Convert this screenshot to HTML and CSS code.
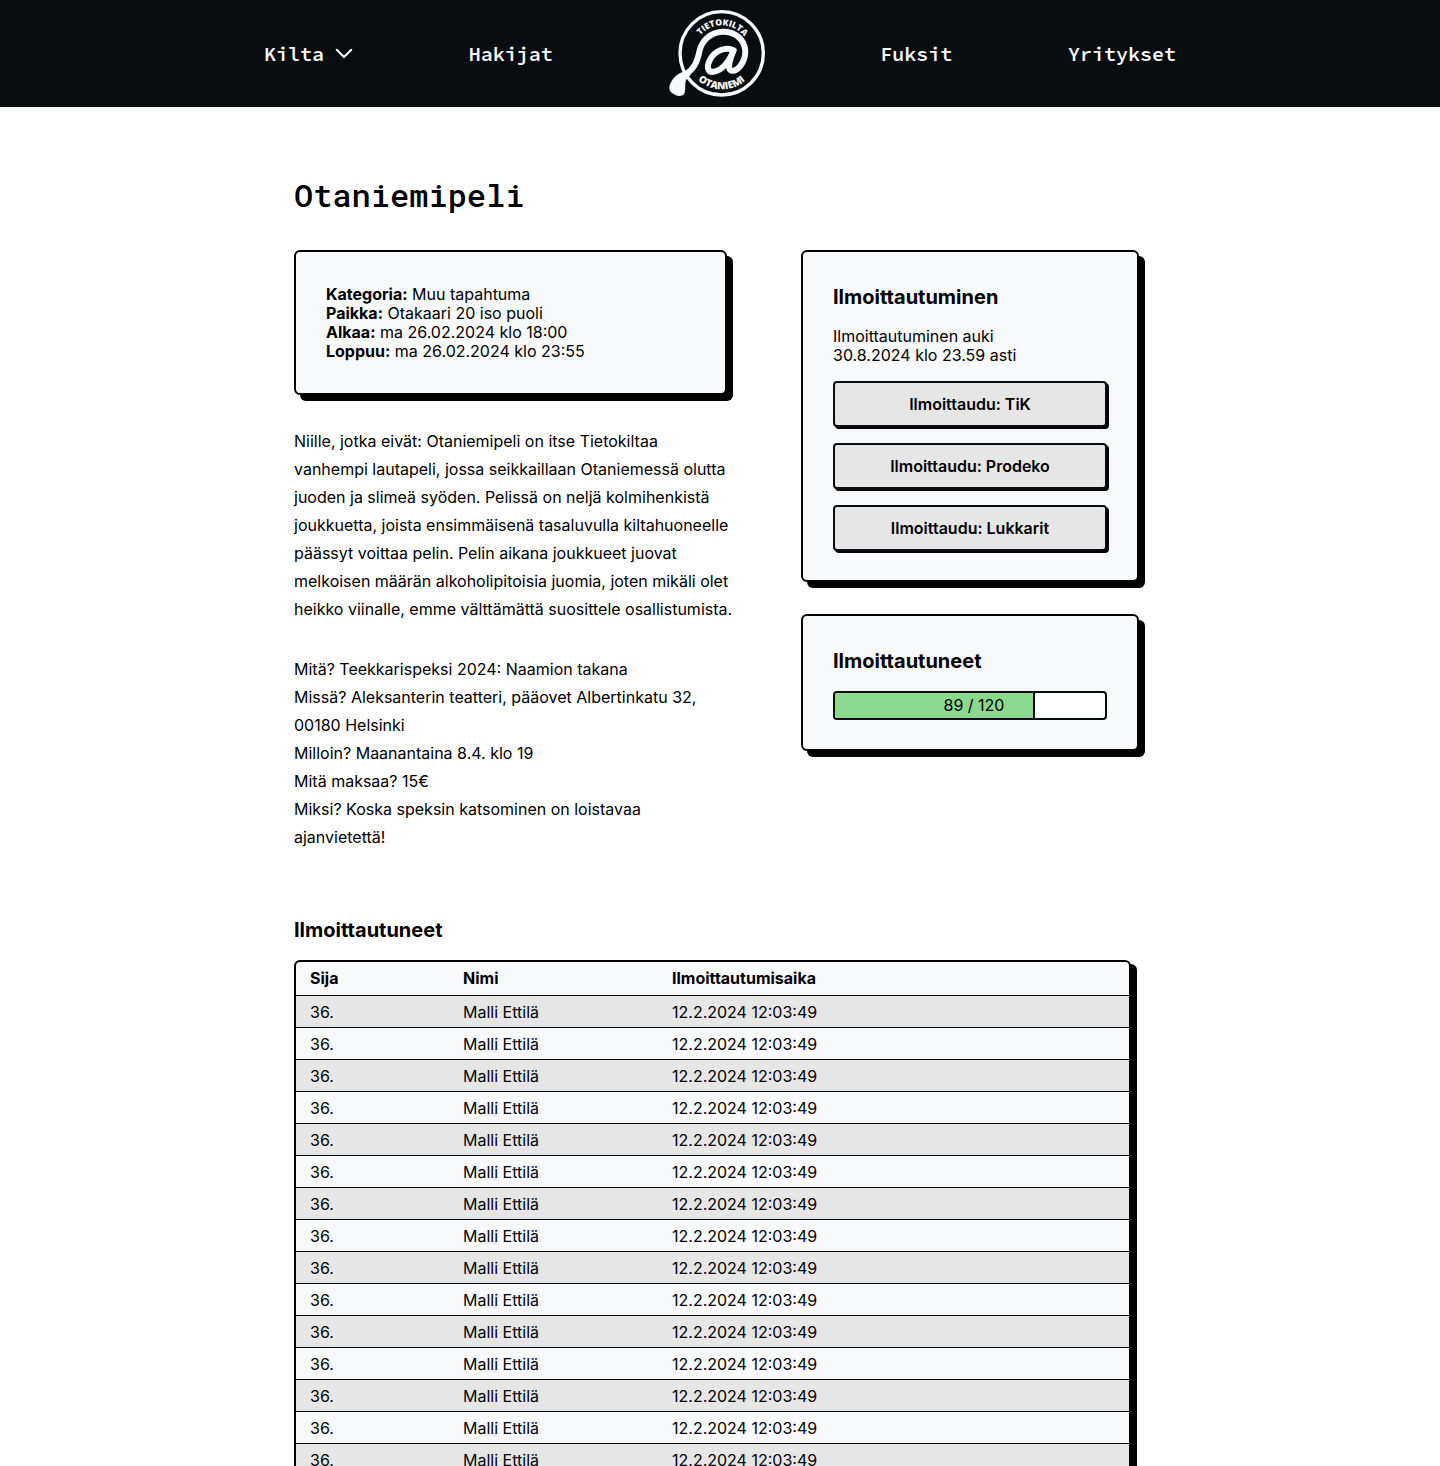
FILE: index.html
```html
<!DOCTYPE html>
<html lang="fi">
<head>
<meta charset="utf-8">
<meta name="viewport" content="width=device-width, initial-scale=1">
<title>Otaniemipeli – Tietokilta</title>
<link rel="stylesheet" href="styles.css">
</head>
<body>
<header class="site-header">
  <nav class="nav" aria-label="Päävalikko">
    <button class="nav-item nav-menu" type="button" aria-expanded="false">Kilta
      <svg class="chevron" width="18" height="11" viewBox="0 0 18 11" aria-hidden="true"><path d="M1.200 1.200 9 9l7.800-7.800" fill="none" stroke="currentColor" stroke-width="2"/></svg>
    </button>
    <a class="nav-item" href="#">Hakijat</a>
    <a class="logo" href="#" aria-label="Tietokilta, Otaniemi">
      <svg width="96" height="87" viewBox="27 30 288 261">
        <defs>
          <path id="arc-top" d="M101 160a84 84 0 0 1 168 0"/>
          <path id="arc-bottom" d="M77 160a108 108 0 0 0 216 0"/>
        </defs>
        <g fill="none" stroke="currentColor" stroke-linecap="round">
          <circle cx="185" cy="160" r="125" stroke-width="10"/>
          <path d="M221 151C200 139 164 150 149 181C138 203 145 219 163 215C188 209 209 180 221 151C209 178 201 208 214 212C232 216 256 187 256 153C253 115 222 94 187 95C149 97 126 124 119 151C112 184 105 204 76 224" stroke-width="18"/>
        </g>
        <path d="M84 211C73 213 58 219 48 227C35 239 25 257 29 270C32 279 40 280 46 285C54 290 67 289 72 283C78 274 74 258 77 244C79 236 84 231 92 224Z" fill="currentColor"/>
        <g fill="currentColor" text-anchor="middle">
          <text class="logo-top"><textPath href="#arc-top" startOffset="51%">TIETOKILTA</textPath></text>
          <text class="logo-bottom"><textPath href="#arc-bottom" startOffset="50%">OTANIEMI</textPath></text>
        </g>
      </svg>
    </a>
    <a class="nav-item" href="#">Fuksit</a>
    <a class="nav-item" href="#">Yritykset</a>
  </nav>
</header>

<main class="page">
  <h1 class="title">Otaniemipeli</h1>

  <div class="columns">
    <article class="event">
      <dl class="card details">
        <div><dt>Kategoria:</dt> <dd>Muu tapahtuma</dd></div>
        <div><dt>Paikka:</dt> <dd>Otakaari 20 iso puoli</dd></div>
        <div><dt>Alkaa:</dt> <dd>ma 26.02.2024 klo 18:00</dd></div>
        <div><dt>Loppuu:</dt> <dd>ma 26.02.2024 klo 23:55</dd></div>
      </dl>
      <p class="text">Niille, jotka eivät: Otaniemipeli on itse Tietokiltaa vanhempi lautapeli, jossa seikkaillaan Otaniemessä olutta juoden ja slimeä syöden. Pelissä on neljä kolmihenkistä joukkuetta, joista ensimmäisenä tasaluvulla kiltahuoneelle päässyt voittaa pelin. Pelin aikana joukkueet juovat melkoisen määrän alkoholipitoisia juomia, joten mikäli olet heikko viinalle, emme välttämättä suosittele osallistumista.</p>
      <p class="text">Mitä? Teekkarispeksi 2024: Naamion takana<br>Missä? Aleksanterin teatteri, pääovet Albertinkatu 32, 00180 Helsinki<br>Milloin? Maanantaina 8.4. klo 19<br>Mitä maksaa? 15€<br>Miksi? Koska speksin katsominen on loistavaa ajanvietettä!</p>
    </article>

    <aside class="sidebar">
      <section class="card">
        <h2 class="heading">Ilmoittautuminen</h2>
        <p class="status">Ilmoittautuminen auki<br>30.8.2024 klo 23.59 asti</p>
        <div class="actions">
          <button class="button" type="button">Ilmoittaudu: TiK</button>
          <button class="button" type="button">Ilmoittaudu: Prodeko</button>
          <button class="button" type="button">Ilmoittaudu: Lukkarit</button>
        </div>
      </section>
      <section class="card">
        <h2 class="heading">Ilmoittautuneet</h2>
        <div class="quota" role="progressbar" aria-label="Ilmoittautuneet" aria-valuemin="0" aria-valuemax="120" aria-valuenow="89">
          <div class="quota-fill" style="width: 74%"></div>
          <span class="quota-label">89 / 120</span>
        </div>
      </section>
    </aside>
  </div>

  <section class="signups">
    <h2 class="heading">Ilmoittautuneet</h2>
    <div class="table-frame">
      <table class="table">
        <thead>
          <tr><th class="col-place" scope="col">Sija</th><th class="col-name" scope="col">Nimi</th><th scope="col">Ilmoittautumisaika</th></tr>
        </thead>
        <tbody>
          <tr><td>36.</td><td>Malli Ettilä</td><td>12.2.2024 12:03:49</td></tr>
          <tr><td>36.</td><td>Malli Ettilä</td><td>12.2.2024 12:03:49</td></tr>
          <tr><td>36.</td><td>Malli Ettilä</td><td>12.2.2024 12:03:49</td></tr>
          <tr><td>36.</td><td>Malli Ettilä</td><td>12.2.2024 12:03:49</td></tr>
          <tr><td>36.</td><td>Malli Ettilä</td><td>12.2.2024 12:03:49</td></tr>
          <tr><td>36.</td><td>Malli Ettilä</td><td>12.2.2024 12:03:49</td></tr>
          <tr><td>36.</td><td>Malli Ettilä</td><td>12.2.2024 12:03:49</td></tr>
          <tr><td>36.</td><td>Malli Ettilä</td><td>12.2.2024 12:03:49</td></tr>
          <tr><td>36.</td><td>Malli Ettilä</td><td>12.2.2024 12:03:49</td></tr>
          <tr><td>36.</td><td>Malli Ettilä</td><td>12.2.2024 12:03:49</td></tr>
          <tr><td>36.</td><td>Malli Ettilä</td><td>12.2.2024 12:03:49</td></tr>
          <tr><td>36.</td><td>Malli Ettilä</td><td>12.2.2024 12:03:49</td></tr>
          <tr><td>36.</td><td>Malli Ettilä</td><td>12.2.2024 12:03:49</td></tr>
          <tr><td>36.</td><td>Malli Ettilä</td><td>12.2.2024 12:03:49</td></tr>
          <tr><td>36.</td><td>Malli Ettilä</td><td>12.2.2024 12:03:49</td></tr>
        </tbody>
      </table>
    </div>
  </section>
</main>
</body>
</html>
```
FILE: styles.css
```css
:root {
  --ink: #000;
  --dark: #0a0d10;
  --light: #f8f9fb;
  --grey: #e6e6e6;
  --green: #8ad98f;
}

* {
  box-sizing: border-box;
}

body,
h1,
h2,
p,
dl,
dd {
  margin: 0;
}

body {
  background: #fff;
  color: var(--ink);
  font: 16px/19px Inter, sans-serif;
}

/* Header */
.site-header {
  background: var(--dark);
  color: var(--light);
  padding: 10px 24px;
}

.nav {
  display: flex;
  align-items: center;
  justify-content: space-between;
  max-width: 912px;
  margin: 0 auto;
}

.nav-item {
  color: inherit;
  font: 600 20px/24px "Source Code Pro", "DejaVu Sans Mono", monospace;
  text-decoration: none;
}

.nav-menu {
  display: flex;
  align-items: center;
  gap: 11px;
  padding: 0;
  border: 0;
  background: none;
  cursor: pointer;
}

.logo {
  display: flex;
  color: inherit;
}

.logo-top {
  font: 800 26px "Open Sans", sans-serif;
}

.logo-bottom {
  font: 800 30px "Open Sans", sans-serif;
}

/* Page */
.page {
  max-width: 852px;
  margin: 0 auto;
  padding: 67px 0 64px;
}

.title {
  margin-bottom: 34px;
  font: 500 32px/42px "Roboto Mono", "DejaVu Sans Mono", monospace;
}

.columns {
  display: flex;
  align-items: flex-start;
  justify-content: space-between;
  gap: 24px;
}

.event {
  display: flex;
  flex-direction: column;
  gap: 32px;
  flex: 0 1 441px;
}

.sidebar {
  display: flex;
  flex-direction: column;
  gap: 32px;
  flex: 0 1 338px;
  margin-right: 7px;
}

.card {
  padding: 33px 30px 29px;
  border: 2px solid var(--ink);
  border-radius: 6px;
  background: var(--light);
  box-shadow: 6px 6px 0 var(--ink);
}

.details {
  margin-right: 8px;
  padding: 33px 30px 32px;
}

.details dt,
.details dd {
  display: inline;
}

.details dt {
  font-weight: 700;
}

.text {
  line-height: 28px;
}

.heading {
  margin-bottom: 18px;
  font-size: 20px;
  font-weight: 700;
  line-height: 24px;
}

.status {
  margin-bottom: 16px;
}

.actions {
  display: flex;
  flex-direction: column;
  gap: 16px;
}

.button {
  height: 46px;
  border: 2px solid var(--dark);
  border-radius: 4px;
  background: var(--grey);
  box-shadow: 2px 2px 0 var(--ink);
  color: var(--ink);
  font: 600 16px/19px Inter, sans-serif;
  cursor: pointer;
}

.quota {
  display: grid;
  height: 29px;
  overflow: hidden;
  border: 2px solid var(--dark);
  border-radius: 4px;
  background: #fff;
}

.quota-fill,
.quota-label {
  grid-area: 1 / 1;
}

.quota-fill {
  border-right: 2px solid var(--dark);
  background: var(--green);
}

.quota-label {
  align-self: center;
  padding-left: 8px;
  text-align: center;
}

/* Sign-up list */
.signups {
  margin: 67px 15px 0 0;
}

.table-frame {
  overflow: hidden;
  border: 2px solid var(--ink);
  border-radius: 6px;
  background: var(--light);
  box-shadow: 6px 4px 0 var(--ink);
}

.table {
  width: 100%;
  border-spacing: 0;
  table-layout: fixed;
}

.table th,
.table td {
  height: 32px;
  padding: 2px 0 0 14px;
  border-bottom: 1px solid var(--ink);
  text-align: left;
}

.table th {
  height: 34px;
  padding-top: 0;
  font-weight: 700;
}

.table tbody tr:nth-child(odd) {
  background: var(--grey);
}

.col-place {
  width: 153px;
}

.col-name {
  width: 209px;
}
```
